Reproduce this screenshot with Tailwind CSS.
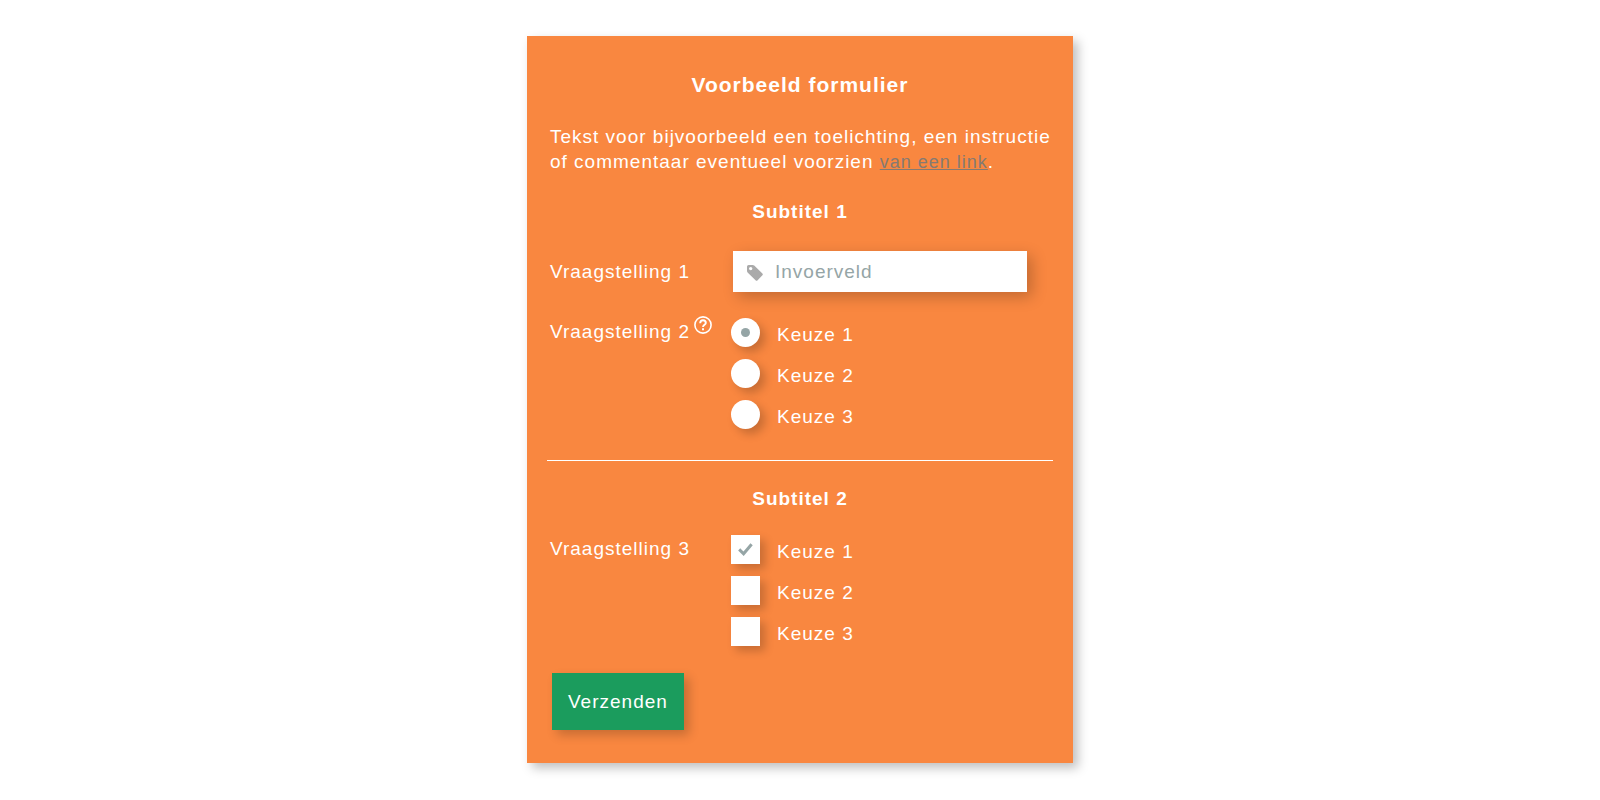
<!DOCTYPE html>
<html lang="nl">
<head>
    <meta charset="UTF-8">
    <meta name="viewport" content="width=device-width, initial-scale=1.0">
    <title>Voorbeeld formulier</title>
    <script src="https://cdn.jsdelivr.net/npm/@tailwindcss/browser@4"></script>
</head>
<body class="bg-white px-4 py-9 font-['Liberation_Sans',Arial,sans-serif] text-[19px] leading-[25px] tracking-[1px] text-white">
    <form class="max-w-[546px] mx-auto bg-[#f98740] px-5 pt-9 pb-[33px] shadow-[5px_5px_10px_rgba(0,0,0,0.25)]">
        <h1 class="text-[21px] leading-[25px] font-bold text-center">Voorbeeld formulier</h1>

        <p class="mt-[27px] pl-[3px] -mr-2">
            Tekst voor bijvoorbeeld een toelichting, een instructie of commentaar eventueel voorzien <a href="#" class="text-[18px] text-[#857a72] underline">van een link</a>.
        </p>

        <h2 class="mt-6 font-bold text-center">Subtitel 1</h2>

        <div class="mt-[27px] px-[3px] flex flex-wrap items-center">
            <label for="vraag1" class="w-[183px]">Vraagstelling 1</label>
            <div class="w-[294px] h-[41px] flex items-center gap-3 bg-white pl-[14px] shadow-[5px_5px_15px_rgba(0,0,0,0.22)]">
                <svg class="w-4 h-4 mt-[3px]" viewBox="0 0 16 16" fill="#aaaaaa">
                    <path fill-rule="evenodd" d="M1.6 0H5.6Q6.6 0 7.2 .6L15.4 8.6Q16.2 9.4 15.4 10.2L10.4 15.4Q9.6 16.2 8.8 15.4L.6 7.4Q0 6.8 0 5.8V1.6Q0 0 1.6 0ZM3.7 1.9a1.7 1.7 0 1 0 0 3.4a1.7 1.7 0 1 0 0-3.4Z"/>
                </svg>
                <input id="vraag1" type="text" placeholder="Invoerveld" class="flex-1 min-w-0 h-full text-[#555555] tracking-[1px] placeholder:text-[#95a5a6] outline-none">
            </div>
        </div>

        <div class="mt-[26px] px-[3px] flex flex-wrap items-start" role="radiogroup" aria-labelledby="vraag2">
            <div class="w-[181px] flex items-start gap-1">
                <span id="vraag2" class="pt-[1px]">Vraagstelling 2</span>
                <button type="button" aria-label="Uitleg" class="-mt-[2px]">
                    <svg class="w-[18px] h-[18px]" viewBox="0 0 18 18" fill="none" stroke="#ffffff">
                        <circle cx="9" cy="9" r="8.1" stroke-width="1.6"/>
                        <path d="M6.2 7.2C6.2 5.2 7.4 4.3 9 4.3S11.8 5.3 11.8 6.9C11.8 8.8 9 8.9 9 11.1" stroke-width="1.9"/>
                        <path d="M9 12.2V14.3" stroke-width="2"/>
                    </svg>
                </button>
            </div>
            <div class="flex flex-col gap-3">
                <label class="flex items-center gap-[17px] h-[29px]">
                    <input type="radio" name="keuze" checked class="appearance-none w-[29px] h-[29px] rounded-full bg-white shadow-[5px_5px_10px_rgba(0,0,0,0.2)] grid place-items-center checked:before:w-[9px] checked:before:h-[9px] checked:before:rounded-full checked:before:bg-[#95a5a6]">
                    <span class="pt-1">Keuze 1</span>
                </label>
                <label class="flex items-center gap-[17px] h-[29px]">
                    <input type="radio" name="keuze" class="appearance-none w-[29px] h-[29px] rounded-full bg-white shadow-[5px_5px_10px_rgba(0,0,0,0.2)] grid place-items-center checked:before:w-[9px] checked:before:h-[9px] checked:before:rounded-full checked:before:bg-[#95a5a6]">
                    <span class="pt-1">Keuze 2</span>
                </label>
                <label class="flex items-center gap-[17px] h-[29px]">
                    <input type="radio" name="keuze" class="appearance-none w-[29px] h-[29px] rounded-full bg-white shadow-[5px_5px_10px_rgba(0,0,0,0.2)] grid place-items-center checked:before:w-[9px] checked:before:h-[9px] checked:before:rounded-full checked:before:bg-[#95a5a6]">
                    <span class="pt-1">Keuze 3</span>
                </label>
            </div>
        </div>

        <hr class="mt-[31px] border-white">

        <h2 class="mt-[25px] font-bold text-center">Subtitel 2</h2>

        <div class="mt-6 px-[3px] flex flex-wrap items-start" role="group" aria-labelledby="vraag3">
            <span id="vraag3" class="w-[181px] pt-[1px]">Vraagstelling 3</span>
            <div class="flex flex-col gap-3">
                <label class="flex items-center gap-[17px] h-[29px]">
                    <span class="grid place-items-center">
                        <input type="checkbox" checked class="peer col-start-1 row-start-1 appearance-none w-[29px] h-[29px] bg-white shadow-[5px_5px_10px_rgba(0,0,0,0.2)]">
                        <svg class="col-start-1 row-start-1 w-[15px] h-[13px] hidden peer-checked:block pointer-events-none z-10" viewBox="0 0 15 13" fill="none" stroke="#95a5a6" stroke-width="3">
                            <path d="M1.2 6.4L5.6 10.8L13.6 1.2"/>
                        </svg>
                    </span>
                    <span class="pt-1">Keuze 1</span>
                </label>
                <label class="flex items-center gap-[17px] h-[29px]">
                    <span class="grid place-items-center">
                        <input type="checkbox" class="peer col-start-1 row-start-1 appearance-none w-[29px] h-[29px] bg-white shadow-[5px_5px_10px_rgba(0,0,0,0.2)]">
                        <svg class="col-start-1 row-start-1 w-[15px] h-[13px] hidden peer-checked:block pointer-events-none z-10" viewBox="0 0 15 13" fill="none" stroke="#95a5a6" stroke-width="3">
                            <path d="M1.2 6.4L5.6 10.8L13.6 1.2"/>
                        </svg>
                    </span>
                    <span class="pt-1">Keuze 2</span>
                </label>
                <label class="flex items-center gap-[17px] h-[29px]">
                    <span class="grid place-items-center">
                        <input type="checkbox" class="peer col-start-1 row-start-1 appearance-none w-[29px] h-[29px] bg-white shadow-[5px_5px_10px_rgba(0,0,0,0.2)]">
                        <svg class="col-start-1 row-start-1 w-[15px] h-[13px] hidden peer-checked:block pointer-events-none z-10" viewBox="0 0 15 13" fill="none" stroke="#95a5a6" stroke-width="3">
                            <path d="M1.2 6.4L5.6 10.8L13.6 1.2"/>
                        </svg>
                    </span>
                    <span class="pt-1">Keuze 3</span>
                </label>
            </div>
        </div>

        <div class="mt-[27px] px-[5px]">
            <button type="submit" class="block bg-[#1b9c5d] px-4 py-4 tracking-[1px] shadow-[5px_5px_10px_rgba(0,0,0,0.2)]">Verzenden</button>
        </div>
    </form>
</body>
</html>
